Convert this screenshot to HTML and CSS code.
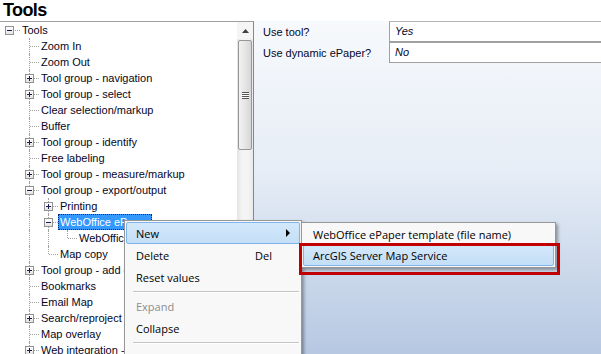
FILE: index.html
```html
<!DOCTYPE html>
<html lang="en">
<head>
    <meta charset="UTF-8">
    <title>Tools</title>
    <link rel="stylesheet" href="styles.css">
</head>
<body>
    <div class="title">Tools</div>
    <div class="main">
        <div class="tree-panel">
            <div class="tree">
                <div class="row"><span class="node root"><span class="exp minus"></span></span><span class="label">Tools</span></div>
                <div class="row"><span class="ind"></span><span class="node"></span><span class="label">Zoom In</span></div>
                <div class="row"><span class="ind"></span><span class="node"></span><span class="label">Zoom Out</span></div>
                <div class="row"><span class="ind"></span><span class="node"><span class="exp plus"></span></span><span class="label">Tool group - navigation</span></div>
                <div class="row"><span class="ind"></span><span class="node"><span class="exp plus"></span></span><span class="label">Tool group - select</span></div>
                <div class="row"><span class="ind"></span><span class="node"></span><span class="label">Clear selection/markup</span></div>
                <div class="row"><span class="ind"></span><span class="node"></span><span class="label">Buffer</span></div>
                <div class="row"><span class="ind"></span><span class="node"><span class="exp plus"></span></span><span class="label">Tool group - identify</span></div>
                <div class="row"><span class="ind"></span><span class="node"></span><span class="label">Free labeling</span></div>
                <div class="row"><span class="ind"></span><span class="node"><span class="exp plus"></span></span><span class="label">Tool group - measure/markup</span></div>
                <div class="row"><span class="ind"></span><span class="node"><span class="exp minus"></span></span><span class="label">Tool group - export/output</span></div>
                <div class="row"><span class="ind"></span><span class="ind line"></span><span class="node"><span class="exp plus"></span></span><span class="label">Printing</span></div>
                <div class="row"><span class="ind"></span><span class="ind line"></span><span class="node"><span class="exp minus"></span></span><span class="label selected">WebOffice ePaper</span></div>
                <div class="row"><span class="ind"></span><span class="ind line"></span><span class="ind line"></span><span class="node last"></span><span class="label">WebOffice ePaper template</span></div>
                <div class="row"><span class="ind"></span><span class="ind line"></span><span class="node last"></span><span class="label">Map copy</span></div>
                <div class="row"><span class="ind"></span><span class="node"><span class="exp plus"></span></span><span class="label">Tool group - add data</span></div>
                <div class="row"><span class="ind"></span><span class="node"></span><span class="label">Bookmarks</span></div>
                <div class="row"><span class="ind"></span><span class="node"></span><span class="label">Email Map</span></div>
                <div class="row"><span class="ind"></span><span class="node"><span class="exp plus"></span></span><span class="label">Search/reproject coordinates</span></div>
                <div class="row"><span class="ind"></span><span class="node"></span><span class="label">Map overlay</span></div>
                <div class="row"><span class="ind"></span><span class="node"><span class="exp plus"></span></span><span class="label">Web integration - links</span></div>
            </div>
            <div class="scrollbar">
                <div class="sb-button">
                    <svg width="7" height="4" viewBox="0 0 7 4"><path d="M0 4 L3.5 0 L7 4 Z" fill="#404040"/></svg>
                </div>
                <div class="sb-thumb">
                    <div class="grip"></div>
                </div>
            </div>
        </div>
        <div class="props">
            <div class="prop-grid">
                <div class="prop-label">Use tool?</div>
                <div class="prop-value first">Yes</div>
                <div class="prop-label">Use dynamic ePaper?</div>
                <div class="prop-value">No</div>
            </div>
        </div>
    </div>

    <!-- context menu lies over the tree -->
    <div class="menu">
        <div class="item hot"><span>New</span><span class="arrow"></span></div>
        <div class="item"><span>Delete</span><span class="key">Del</span></div>
        <div class="item"><span>Reset values</span></div>
        <div class="sep"></div>
        <div class="item disabled"><span>Expand</span></div>
        <div class="item"><span>Collapse</span></div>
        <div class="sep"></div>
        <div class="item"><span>Cut</span><span class="key">Ctrl+X</span></div>
    </div>
    <div class="submenu">
        <div class="item"><span>WebOffice ePaper template (file name)</span></div>
        <div class="item hot"><span>ArcGIS Server Map Service</span></div>
    </div>
    <div class="callout"></div>
</body>
</html>
```

FILE: styles.css
```css
body {
    margin: 0;
    width: 601px;
    height: 354px;
    overflow: hidden;
    background: #fff;
    font-family: "Liberation Sans", Arial, sans-serif;
    font-size: 11px;
    color: #06061e;
}
.title {
    height: 21px;
    padding-left: 3px;
    font-size: 18px;
    font-weight: bold;
    line-height: 20px;
    letter-spacing: -0.6px;
    color: #000;
}
.main {
    display: flex;
    height: 333px;
}
.tree-panel {
    display: flex;
    width: 253px;
    border-top: 1px solid #a0a0a0;
    border-right: 1px solid #828790;
    background: #fff;
}
.tree {
    width: 237px;
    overflow: hidden;
}
.row {
    display: flex;
    height: 16px;
    align-items: center;
    white-space: nowrap;
}
.ind, .node {
    position: relative;
    flex: none;
    width: 19px;
    height: 16px;
}
.row > :first-child {
    width: 20px;
}
.ind.line::before, .node::before {
    content: "";
    position: absolute;
    left: 9px;
    top: 0;
    bottom: 0;
    border-left: 1px dotted #a0a0a0;
}
.node.last::before {
    bottom: 8px;
}
.node.root::before {
    display: none;
}
.node::after {
    content: "";
    position: absolute;
    left: 10px;
    right: 0;
    top: 8px;
    border-top: 1px dotted #a0a0a0;
}
.exp {
    position: absolute;
    z-index: 1;
    left: 5px;
    top: 4px;
    width: 7px;
    height: 7px;
    border: 1px solid #929292;
    background: linear-gradient(#ffffff, #e4e4e4);
}
.exp::before {
    content: "";
    position: absolute;
    left: 1px;
    top: 3px;
    width: 5px;
    height: 1px;
    background: #1c1c50;
}
.exp.plus::after {
    content: "";
    position: absolute;
    left: 3px;
    top: 1px;
    width: 1px;
    height: 5px;
    background: #1c1c50;
}
.label {
    padding: 0 2px 0 1px;
    line-height: 14px;
    border: 1px solid transparent;
}
.label.selected {
    background: #3399ff;
    color: #fff;
    border: 1px dotted #0a246a;
}
.scrollbar {
    width: 16px;
    background: linear-gradient(90deg, #e3e3e3, #f4f4f4 30%, #f4f4f4 70%, #e8e8e8);
}
.sb-button {
    display: flex;
    height: 17px;
    align-items: center;
    justify-content: center;
    background: #f5f5f5;
}
.sb-thumb {
    display: flex;
    height: 108px;
    margin: 1px 1px 0;
    align-items: center;
    justify-content: center;
    border: 1px solid #979797;
    border-radius: 2px;
    background: linear-gradient(90deg, #f2f2f2, #e6e6e6 50%, #d6d6d6);
}
.grip {
    width: 7px;
    height: 7px;
    background: repeating-linear-gradient(#555 0 1px, #fff 1px 2px);
}
.props {
    flex: 1;
    background: linear-gradient(#f7f9fc, #e6edf6 45%, #b6c8e2);
}
.prop-grid {
    display: grid;
    grid-template-columns: 135px 1fr;
}
.prop-label {
    padding-left: 9px;
    line-height: 20px;
}
.prop-value {
    padding-left: 5px;
    line-height: 19px;
    font-style: italic;
    background: #fff;
    border-left: 1px solid #a0a0a0;
    border-bottom: 1px solid #a0a0a0;
}
.prop-value.first {
    border-top: 1px solid #b4b4b4;
    border-bottom-width: 2px;
    line-height: 19px;
}
.prop-label:first-child {
    line-height: 22px;
}
.menu, .submenu {
    position: absolute;
    padding: 1px;
    border: 1px solid #979797;
    background: #f8f8f8;
    box-shadow: 2px 2px 3px rgba(0, 0, 0, 0.35);
    font-family: "Open Sans", "Liberation Sans", sans-serif;
    font-size: 11px;
    color: #000;
}
.menu {
    left: 124px;
    top: 220px;
    width: 174px;
    height: 150px;
}
.submenu {
    left: 301px;
    top: 222px;
    width: 251px;
}
.item {
    display: flex;
    height: 20px;
    align-items: center;
    padding: 0 9px 0 9px;
    border: 1px solid transparent;
    border-radius: 2px;
}
.submenu .item {
    height: 19px;
}
.item.hot {
    background: linear-gradient(#d3e8fb, #c3def6);
    border-color: #7eb4ea;
}
.item.disabled {
    color: #8d8d8d;
}
.key {
    margin-left: auto;
    width: 35px;
}
.arrow {
    margin-left: auto;
    width: 0;
    height: 0;
    border-left: 4px solid #000;
    border-top: 4px solid transparent;
    border-bottom: 4px solid transparent;
}
.sep {
    height: 1px;
    margin: 3px 1px 2px 7px;
    background: #c5c5c5;
    border-bottom: 1px solid #fff;
}
.callout {
    position: absolute;
    left: 299px;
    top: 243px;
    width: 255px;
    height: 26px;
    border: 3px solid #c00000;
}
```
